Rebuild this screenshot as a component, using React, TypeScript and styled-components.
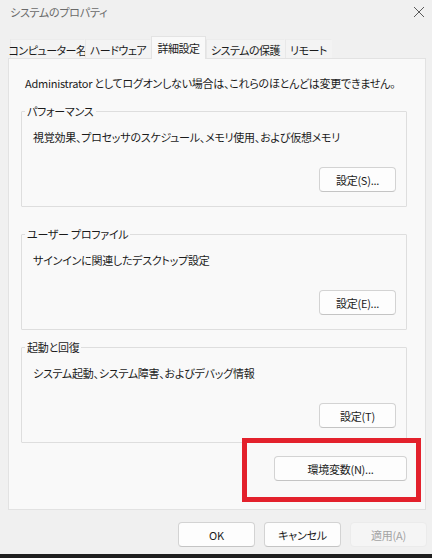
import React from "react";
import styled, { createGlobalStyle } from "styled-components";

const Global = createGlobalStyle`
  html, body { margin: 0; padding: 0; background: #f0f0f0; }
  * { box-sizing: border-box; }
  body {
    font-family: "Noto Sans CJK JP", "Noto Sans", sans-serif;
    font-size: 11px;
    letter-spacing: -0.25px;
    color: #1b1b1b;
    font-feature-settings: "palt";
  }
`;

const Window = styled.div`
  width: 432px;
  height: 558px;
  background: #f0f0f0;
  display: flex;
  flex-direction: column;
  overflow: hidden;
`;

const TitleBar = styled.div`
  height: 30px;
  display: flex;
  align-items: flex-start;
  justify-content: space-between;
  padding: 4px 6px 0 10px;
`;

const Title = styled.span`
  font-size: 11px;
  line-height: 16px;
  color: #6a6a6a;
`;

const CloseBtn = styled.div`
  width: 14px;
  height: 14px;
  margin-top: 1px;
  display: flex;
  align-items: center;
  justify-content: center;
`;

const TabStrip = styled.div`
  height: 28px;
  display: flex;
  align-items: flex-end;
  padding-left: 10px;
`;

const Tab = styled.div<{ $w: number; $active?: boolean }>`
  width: ${(p) => p.$w}px;
  height: ${(p) => (p.$active ? 23 : 19)}px;
  display: flex;
  align-items: center;
  justify-content: center;
  padding-top: ${(p) => (p.$active ? 0 : 1)}px;
  background: ${(p) => (p.$active ? "#f9f9f9" : "#f3f3f3")};
  border-left: 1px solid ${(p) => (p.$active ? "#e3e3e3" : "#e8e8e8")};
  border-top: 1px solid ${(p) => (p.$active ? "#e3e3e3" : "#ececec")};
  border-right: 1px solid ${(p) => (p.$active ? "#e3e3e3" : "transparent")};
  margin-bottom: ${(p) => (p.$active ? -1 : 0)}px;
  position: relative;
  z-index: ${(p) => (p.$active ? 2 : 1)};
  font-size: 11px;
  letter-spacing: -0.5px;
  line-height: 14px;
  white-space: nowrap;
  color: #1b1b1b;
`;

const Panel = styled.div`
  margin: 0 6px 0 8px;
  height: 452px;
  background: #f9f9f9;
  border: 1px solid #e2e2e2;
  display: flex;
  flex-direction: column;
  padding: 17px 17px 0 12px;
`;

const Note = styled.div`
  line-height: 14px;
  padding-left: 4px;
  white-space: nowrap;
`;

const Group = styled.fieldset<{ $mt: number }>`
  margin: ${(p) => p.$mt}px 0 0 0;
  width: 386px;
  min-width: 0;
  border: 1px solid #dedede;
  border-radius: 1px;
  padding: 0 10px 14px 10px;
  display: flex;
  flex-direction: column;
`;

const Legend = styled.legend`
  margin-left: -7px;
  padding: 0 2px;
  line-height: 14px;
  font-size: 11px;
`;

const Desc = styled.div`
  margin-top: 12px;
  line-height: 14px;
  padding-left: 1px;
  white-space: nowrap;
`;

const Button = styled.button<{ $w: number; $disabled?: boolean }>`
  width: ${(p) => p.$w}px;
  height: 25px;
  background: ${(p) => (p.$disabled ? "#f5f5f5" : "#fdfdfd")};
  border: 1px solid ${(p) => (p.$disabled ? "#ebebeb" : "#d3d3d3")};
  border-bottom-color: ${(p) => (p.$disabled ? "#ebebeb" : "#c4c4c4")};
  border-radius: 4px;
  font-family: inherit;
  font-size: 11px;
  letter-spacing: -0.25px;
  font-feature-settings: "palt";
  color: ${(p) => (p.$disabled ? "#a3a3a3" : "#1b1b1b")};
  padding: 0;
  line-height: 14px;
  display: flex;
  align-items: center;
  justify-content: center;
`;

const GroupButton = styled(Button)`
  align-self: flex-end;
  margin-top: 23px;
`;

const EnvRow = styled.div`
  display: flex;
  justify-content: flex-end;
  margin-top: 13px;
  width: 386px;
`;

const EnvWrap = styled.div`
  position: relative;
`;

const Highlight = styled.div`
  position: absolute;
  top: -18px;
  left: -32px;
  right: -14px;
  bottom: -21px;
  border: 5px solid #e3212c;
  pointer-events: none;
`;

const Footer = styled.div`
  flex: 1;
  display: flex;
  justify-content: flex-end;
  align-items: flex-start;
  gap: 9px;
  padding: 12px 5px 0 0;
`;

const BottomEdge = styled.div`
  height: 4px;
  background: #1e1e1e;
`;

const groups = [
  { title: "パフォーマンス", desc: "視覚効果、プロセッサのスケジュール、メモリ使用、および仮想メモリ", btn: "設定(S)...", mt: 14 },
  { title: "ユーザー プロファイル", desc: "サインインに関連したデスクトップ設定", btn: "設定(E)...", mt: 20 },
  { title: "起動と回復", desc: "システム起動、システム障害、およびデバッグ情報", btn: "設定(T)", mt: 10 },
];

const tabs = [
  { label: "コンピューター名", w: 75 },
  { label: "ハードウェア", w: 66 },
  { label: "詳細設定", w: 55, active: true },
  { label: "システムの保護", w: 79 },
  { label: "リモート", w: 47 },
];

export default function App() {
  return (
    <>
      <Global />
      <Window>
        <TitleBar>
          <Title>システムのプロパティ</Title>
          <CloseBtn>
            <svg width="12" height="12" viewBox="0 0 12 12">
              <path d="M1 1 L11 11 M11 1 L1 11" stroke="#5a5a5a" strokeWidth="1" fill="none" />
            </svg>
          </CloseBtn>
        </TitleBar>
        <TabStrip>
          {tabs.map((t) => (
            <Tab key={t.label} $w={t.w} $active={t.active}>
              {t.label}
            </Tab>
          ))}
        </TabStrip>
        <Panel>
          <Note>Administrator としてログオンしない場合は、これらのほとんどは変更できません。</Note>
          {groups.map((g) => (
            <Group key={g.title} $mt={g.mt}>
              <Legend>{g.title}</Legend>
              <Desc>{g.desc}</Desc>
              <GroupButton $w={77}>{g.btn}</GroupButton>
            </Group>
          ))}
          <EnvRow>
            <EnvWrap>
              <Button $w={133}>環境変数(N)...</Button>
              <Highlight />
            </EnvWrap>
          </EnvRow>
        </Panel>
        <Footer>
          <Button $w={77}>OK</Button>
          <Button $w={77}>キャンセル</Button>
          <Button $w={77} $disabled>適用(A)</Button>
        </Footer>
        <BottomEdge />
      </Window>
    </>
  );
}
